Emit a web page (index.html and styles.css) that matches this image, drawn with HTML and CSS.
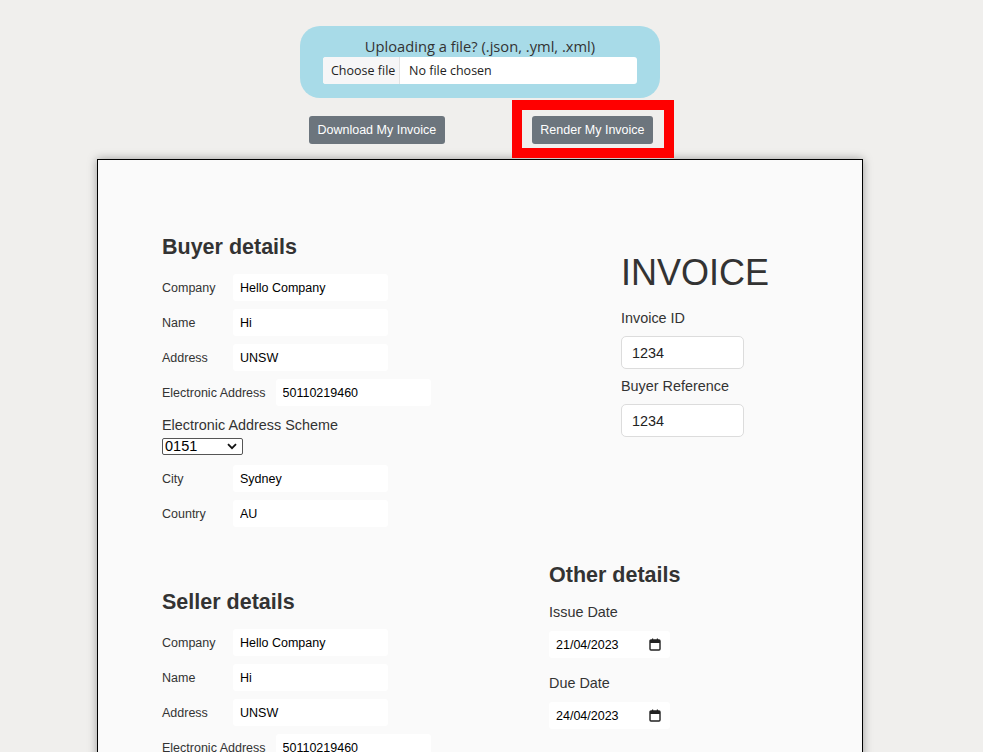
FILE: index.html
```html
<!DOCTYPE html>
<html lang="en">
<head>
<meta charset="utf-8">
<title>Invoice</title>
<link rel="stylesheet" href="styles.css">
</head>
<body>
<div class="wrap">
  <div class="upload">
    <div class="upload-title">Uploading a file? (.json, .yml, .xml)</div>
    <div class="file-input"><span class="file-btn">Choose file</span><span class="file-name">No file chosen</span></div>
  </div>
</div>
<div class="actions">
  <button class="btn btn-download">Download My Invoice</button>
  <div class="highlight"><button class="btn">Render My Invoice</button></div>
</div>
<div class="wrap">
  <div class="card">
    <div class="row-top">
      <section class="col-buyer">
        <h2 class="section-title">Buyer details</h2>
        <div class="field"><span class="field-label">Company</span><input class="field-input" value="Hello Company"></div>
        <div class="field"><span class="field-label">Name</span><input class="field-input" value="Hi"></div>
        <div class="field"><span class="field-label">Address</span><input class="field-input" value="UNSW"></div>
        <div class="field"><span class="field-label">Electronic Address</span><input class="field-input" value="50110219460"></div>
        <div class="scheme-label">Electronic Address Scheme</div>
        <div class="select-wrap">
          <select class="scheme-select"><option>0151</option></select>
          <svg class="chevron" width="10" height="7" viewBox="0 0 10 7"><path d="M1 1.2 L5 5.2 L9 1.2" fill="none" stroke="#111" stroke-width="1.8"/></svg>
        </div>
        <div class="field field-city"><span class="field-label">City</span><input class="field-input" value="Sydney"></div>
        <div class="field"><span class="field-label">Country</span><input class="field-input" value="AU"></div>
      </section>
      <section class="col-invoice">
        <h1 class="invoice-title">INVOICE</h1>
        <div class="stack-label">Invoice ID</div>
        <input class="box-input" value="1234">
        <div class="stack-label">Buyer Reference</div>
        <input class="box-input" value="1234">
      </section>
    </div>
    <div class="row-bottom">
      <section class="col-seller">
        <h2 class="section-title">Seller details</h2>
        <div class="field"><span class="field-label">Company</span><input class="field-input" value="Hello Company"></div>
        <div class="field"><span class="field-label">Name</span><input class="field-input" value="Hi"></div>
        <div class="field"><span class="field-label">Address</span><input class="field-input" value="UNSW"></div>
        <div class="field"><span class="field-label">Electronic Address</span><input class="field-input" value="50110219460"></div>
      </section>
      <section class="col-other">
        <h2 class="section-title">Other details</h2>
        <div class="stack-label">Issue Date</div>
        <div class="date-input"><span>21/04/2023</span>
          <svg width="12" height="13" viewBox="0 0 12 13"><rect x="1" y="2" width="10" height="10" rx="1" fill="none" stroke="#222" stroke-width="1.4"/><rect x="1" y="2" width="10" height="3" fill="#222"/><rect x="3" y="0.5" width="1.2" height="2" fill="#222"/><rect x="7.8" y="0.5" width="1.2" height="2" fill="#222"/></svg>
        </div>
        <div class="stack-label">Due Date</div>
        <div class="date-input"><span>24/04/2023</span>
          <svg width="12" height="13" viewBox="0 0 12 13"><rect x="1" y="2" width="10" height="10" rx="1" fill="none" stroke="#222" stroke-width="1.4"/><rect x="1" y="2" width="10" height="3" fill="#222"/><rect x="3" y="0.5" width="1.2" height="2" fill="#222"/><rect x="7.8" y="0.5" width="1.2" height="2" fill="#222"/></svg>
        </div>
      </section>
    </div>
  </div>
</div>
</body>
</html>
```
FILE: styles.css
```css
html, body {
  margin: 0;
  padding: 0;
}
body {
  background: #f0efed;
  font-family: "Liberation Sans", Arial, sans-serif;
  color: #333;
  overflow: hidden;
  height: 752px;
}
.wrap {
  margin-left: 97px;
  width: 766px;
}
.upload {
  width: 360px;
  box-sizing: border-box;
  margin: 26px auto 0;
  padding: 11px 23px 14px;
  background: #a8dbe8;
  border-radius: 20px;
  font-family: "Open Sans", sans-serif;
  color: #333;
}
.upload-title {
  text-align: center;
  font-size: 14.7px;
  line-height: 18px;
}
.file-input {
  margin-top: 2px;
  display: flex;
  height: 27px;
  background: #fff;
  border-radius: 3px;
  font-size: 12.5px;
  line-height: 27px;
  overflow: hidden;
  color: #222;
}
.file-btn {
  width: 77px;
  box-sizing: border-box;
  padding-left: 8px;
  background: #f6f6f7;
  border-right: 1px solid #e2e2e2;
}
.file-name {
  padding-left: 9px;
}
.actions {
  display: flex;
  justify-content: center;
  align-items: flex-start;
  gap: 67px;
  margin-top: 2px;
}
.btn {
  font-family: "Liberation Sans", Arial, sans-serif;
  font-size: 12.5px;
  line-height: 16px;
  height: 28px;
  padding: 0 8.5px;
  border: 0;
  border-radius: 3px;
  background: #6c757d;
  color: #fff;
  display: block;
}
.btn-download {
  margin-top: 16px;
}
.highlight {
  border: 10px solid #ff0000;
  padding: 6px 11px 4px 10px;
}
.card {
  margin-top: 1px;
  background: #fafafa;
  border: 1px solid #000;
  box-shadow: 0 0 9px rgba(0, 0, 0, 0.35);
  padding: 75px 64px 40px;
  height: 700px;
}
.row-top,
.row-bottom {
  display: flex;
  align-items: flex-start;
}
.row-bottom {
  margin-top: 28px;
}
.col-buyer {
  width: 459px;
}
.col-seller {
  width: 387px;
  margin-top: 27px;
}
.section-title {
  margin: 0 0 15px;
  font-size: 21.5px;
  line-height: 24px;
  font-weight: bold;
  color: #333;
}
.field {
  display: flex;
  align-items: center;
  height: 27px;
  margin-bottom: 8px;
}
.field-label {
  min-width: 61px;
  margin-right: 10px;
  font-size: 12.5px;
  color: #333;
  white-space: nowrap;
}
.field-input {
  width: 155px;
  height: 27px;
  box-sizing: border-box;
  border: 0;
  border-radius: 3px;
  background: #fff;
  padding: 0 7px;
  font-family: "Liberation Sans", Arial, sans-serif;
  font-size: 12.5px;
  color: #000;
}
.scheme-label {
  margin-top: 10px;
  font-size: 14.4px;
  line-height: 18px;
  color: #333;
}
.select-wrap {
  position: relative;
  width: 81px;
  height: 17px;
  margin-top: 4px;
}
.scheme-select {
  appearance: none;
  -webkit-appearance: none;
  width: 81px;
  height: 17px;
  box-sizing: border-box;
  border: 1px solid #555;
  border-radius: 2px;
  background: #fff;
  padding: 0 0 0 2px;
  font-family: "Liberation Sans", Arial, sans-serif;
  font-size: 14.5px;
  line-height: 15px;
  color: #000;
  display: block;
}
.chevron {
  position: absolute;
  right: 6px;
  top: 5px;
  pointer-events: none;
}
.field-city {
  margin-top: 10px;
}
.col-invoice {
  margin-top: 17px;
}
.invoice-title {
  margin: 0 0 15px;
  font-size: 36px;
  line-height: 42px;
  font-weight: normal;
  color: #333;
}
.stack-label {
  font-size: 14.4px;
  line-height: 18px;
  color: #333;
  margin-bottom: 9px;
}
.box-input {
  display: block;
  width: 123px;
  height: 33px;
  box-sizing: border-box;
  border: 1px solid #dcdcdc;
  border-radius: 5px;
  background: #fff;
  padding: 0 10px;
  font-family: "Liberation Sans", Arial, sans-serif;
  font-size: 14.4px;
  color: #222;
  margin-bottom: 8px;
}
.col-other .stack-label {
  margin-bottom: 10px;
}
.col-other .section-title {
  margin-bottom: 16px;
}
.date-input {
  width: 121px;
  height: 27px;
  box-sizing: border-box;
  background: #fff;
  border-radius: 3px;
  padding: 0 9px 0 7px;
  display: flex;
  align-items: center;
  justify-content: space-between;
  font-size: 12.5px;
  color: #000;
  margin-bottom: 16px;
}
```
